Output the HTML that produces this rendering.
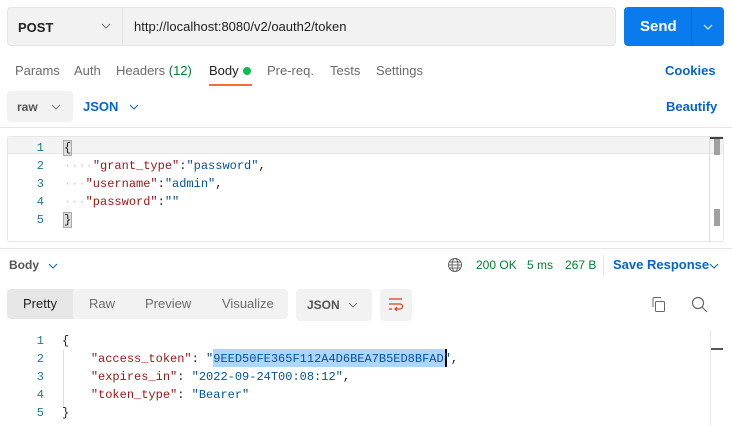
<!DOCTYPE html><html><head><meta charset="utf-8"><style>
*{margin:0;padding:0;box-sizing:border-box}
body{width:732px;height:425px;overflow:hidden;background:#fff;font-family:"Liberation Sans",sans-serif;font-size:13px;color:#212121;position:relative}
.a{position:absolute;white-space:nowrap}
.g{color:#6b6b6b}
.b{color:#0265d2;font-weight:bold}
.m{font-family:"Liberation Mono",monospace;font-size:12px}
.k{color:#a31515}.s{color:#0451a5}
.ln{color:#237893;text-align:right;width:20px}
svg{position:absolute}
</style></head><body>
<div class="a" style="left:7px;top:7px;width:609px;height:39px;background:#f2f2f2;border:1px solid #e6e6e6;border-radius:4px"></div>
<div class="a" style="left:122px;top:8px;width:1px;height:37px;background:#e2e2e2"></div>
<div class="a" style="left:18px;top:20px;font-weight:bold;color:#212121">POST</div>
<svg style="left:101px;top:23px" width="10" height="6"><path d="M1 1l4 4 4-4" stroke="#777" fill="none"/></svg>
<div class="a" style="left:134px;top:19px;color:#212121">http://localhost:8080/v2/oauth2/token</div>
<div class="a" style="left:624px;top:7px;width:100px;height:39px;background:#097bed;border-radius:4px"></div>
<div class="a" style="left:691px;top:7px;width:1px;height:39px;background:#0567cc"></div>
<div class="a" style="left:640px;top:18px;color:#fff;font-weight:bold;font-size:15px">Send</div>
<svg style="left:703px;top:24px" width="10" height="6"><path d="M1 1l4 4 4-4" stroke="#fff" fill="none"/></svg>
<div class="a g" style="left:15px;top:63px">Params</div>
<div class="a g" style="left:74px;top:63px">Auth</div>
<div class="a g" style="left:116px;top:63px">Headers <span style="color:#007f31">(12)</span></div>
<div class="a" style="left:209px;top:63px">Body</div>
<div class="a" style="left:243px;top:67px;width:8px;height:8px;border-radius:50%;background:#0cbb52"></div>
<div class="a" style="left:209px;top:84px;width:43px;height:2px;background:#ff6c37"></div>
<div class="a g" style="left:267px;top:63px">Pre-req.</div>
<div class="a g" style="left:330px;top:63px">Tests</div>
<div class="a g" style="left:376px;top:63px">Settings</div>
<div class="a b" style="left:665px;top:63px">Cookies</div>
<div class="a" style="left:7px;top:91px;width:66px;height:31px;background:#f2f2f2;border-radius:4px"></div>
<div class="a" style="left:17px;top:100px;font-size:12px;color:#555;font-weight:bold">raw</div>
<svg style="left:51px;top:104px" width="10" height="6"><path d="M1 1l4 4 4-4" stroke="#777" fill="none"/></svg>
<div class="a b" style="left:83px;top:99px">JSON</div>
<svg style="left:129px;top:104px" width="10" height="6"><path d="M1 1l4 4 4-4" stroke="#0265d2" fill="none"/></svg>
<div class="a b" style="left:666px;top:99px">Beautify</div>
<div class="a" style="left:0;top:127px;width:732px;height:1px;background:#e6e6e6"></div>
<div class="a" style="left:7px;top:136px;width:717px;height:106px;border:1px solid #e6e6e6;border-radius:3px"></div>
<div class="a" style="left:8px;top:137px;width:715px;height:17px;background:#f3f3f3;border-bottom:1px solid #e8e8e8"></div>
<div class="a" style="left:709px;top:137px;width:1px;height:104px;background:#ddd"></div>
<div class="a" style="left:710px;top:137px;width:13px;height:2px;background:#444"></div>
<div class="a" style="left:714px;top:139px;width:6px;height:16px;background:#a0a0a0"></div>
<div class="a" style="left:714px;top:209px;width:6px;height:17px;background:#a0a0a0"></div>
<div class="a m ln" style="left:24px;top:139px;line-height:18px;white-space:pre">1
2
3
4
5</div>
<div class="a m" style="left:64px;top:139px;line-height:18px;white-space:pre"><span style="background:#ddd;outline:1px solid #aaa">{</span>
<span style="color:#ccc">····</span><span class="k">"grant_type"</span>:<span class="s">"password"</span>,
<span style="color:#ccc">···</span><span class="k">"username"</span>:<span class="s">"admin"</span>,
<span style="color:#ccc">···</span><span class="k">"password"</span>:<span class="s">""</span>
<span style="background:#ddd;outline:1px solid #aaa">}</span></div>
<div class="a" style="left:0;top:248px;width:732px;height:1px;background:#e6e6e6"></div>
<div class="a" style="left:9px;top:258px;font-size:12px;color:#555;font-weight:bold">Body</div>
<svg style="left:48px;top:263px" width="10" height="6"><path d="M1 1l4 4 4-4" stroke="#0265d2" fill="none"/></svg>
<svg style="left:447px;top:257px" width="16" height="16" fill="none" stroke="#666"><circle cx="8" cy="8" r="6.5"/><ellipse cx="8" cy="8" rx="3" ry="6.5"/><path d="M1.5 8h13M2.5 5h11M2.5 11h11"/></svg>
<div class="a" style="left:476px;top:258px;color:#007f31;font-size:12px">200 OK</div>
<div class="a" style="left:527px;top:258px;color:#007f31;font-size:12px">5 ms</div>
<div class="a" style="left:565px;top:258px;color:#007f31;font-size:12px">267 B</div>
<div class="a" style="left:603px;top:255px;width:1px;height:20px;background:#e6e6e6"></div>
<div class="a b" style="left:613px;top:257px">Save Response</div>
<svg style="left:709px;top:263px" width="10" height="6"><path d="M1 1l4 4 4-4" stroke="#0265d2" fill="none"/></svg>
<div class="a" style="left:7px;top:289px;width:281px;height:30px;background:#f2f2f2;border-radius:4px"></div>
<div class="a" style="left:7px;top:289px;width:66px;height:30px;background:#e6e6e6;border-radius:4px 0 0 4px"></div>
<div class="a" style="left:23px;top:296px">Pretty</div>
<div class="a g" style="left:89px;top:296px">Raw</div>
<div class="a g" style="left:145px;top:296px">Preview</div>
<div class="a g" style="left:222px;top:296px">Visualize</div>
<div class="a" style="left:296px;top:289px;width:76px;height:32px;background:#f2f2f2;border-radius:4px"></div>
<div class="a" style="left:307px;top:298px;font-size:12px;color:#555;font-weight:bold">JSON</div>
<svg style="left:348px;top:302px" width="10" height="6"><path d="M1 1l4 4 4-4" stroke="#777" fill="none"/></svg>
<div class="a" style="left:380px;top:289px;width:32px;height:32px;background:#f2f2f2;border-radius:4px"></div>
<svg style="left:388px;top:297px" width="16" height="16" fill="none" stroke="#d9401c" stroke-width="1.2"><path d="M1 2h13M1 7h11a2.5 2.5 0 010 5H7M9 10l-2 2 2 2M1 12h3"/></svg>
<svg style="left:651px;top:296px" width="16" height="17" fill="none" stroke="#666"><rect x="4.5" y="5.5" width="9" height="10" rx="1"/><path d="M2 11V2.5a1 1 0 011-1h7"/></svg>
<svg style="left:691px;top:296px" width="17" height="17" fill="none" stroke="#666" stroke-width="1.2"><circle cx="7" cy="7" r="5.5"/><path d="M11 11l5 5"/></svg>
<div class="a" style="left:710px;top:330px;width:1px;height:95px;background:#e6e6e6"></div>
<div class="a" style="left:711px;top:348px;width:12px;height:2px;background:#555"></div>
<div class="a" style="left:213px;top:349px;width:232px;height:18px;background:#add6ff"></div>
<div class="a" style="left:445px;top:349px;width:2px;height:18px;background:#000"></div>
<div class="a" style="left:63px;top:350px;width:1px;height:57px;background:#ddd"></div>
<div class="a m ln" style="left:24px;top:332px;line-height:18px;white-space:pre">1
2
3
4
5</div>
<div class="a m" style="left:62px;top:332px;line-height:18px;white-space:pre">{
    <span class="k">"access_token"</span>: <span class="s">"9EED50FE365F112A4D6BEA7B5ED8BFAD"</span>,
    <span class="k">"expires_in"</span>: <span class="s">"2022-09-24T00:08:12"</span>,
    <span class="k">"token_type"</span>: <span class="s">"Bearer"</span>
}</div>
</body></html>
